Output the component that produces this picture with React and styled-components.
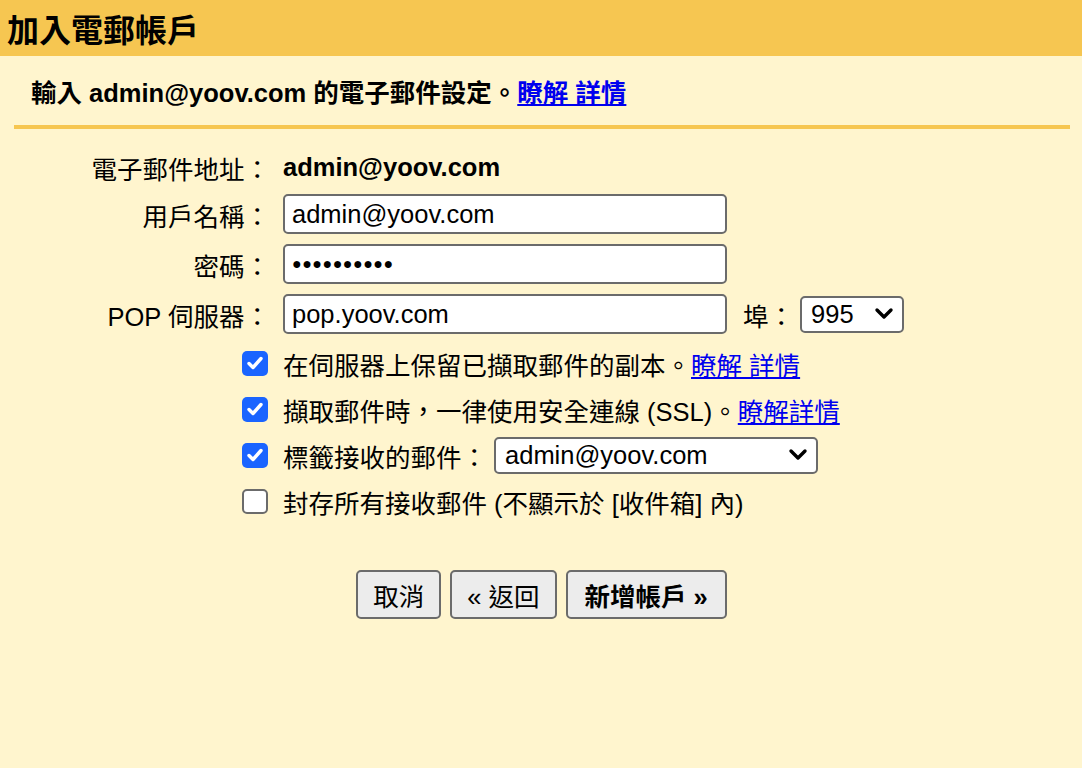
import React from 'react';
import styled, { createGlobalStyle } from 'styled-components';

const GlobalStyle = createGlobalStyle`
  html, body {
    margin: 0;
    padding: 0;
    background: #fff5ce;
  }
  body {
    font-family: "Liberation Sans", "Noto Sans CJK TC", sans-serif;
    color: #000;
  }
`;

const Page = styled.div`
  width: 1082px;
  height: 768px;
  background: #fff5ce;
  overflow: hidden;
`;

const Header = styled.div`
  height: 56px;
  background: #f6c651;
  display: flex;
  align-items: center;
  padding-left: 7px;
  font-size: 32px;
  font-weight: bold;
`;

const Intro = styled.div`
  margin: 0 12px 0 14px;
  padding: 16px 0 16px 17px;
  border-bottom: 4px solid #f6c651;
  font-size: 25.5px;
  font-weight: bold;
`;

const Link = styled.a`
  color: #0000ee;
  text-decoration: underline;
  cursor: pointer;
`;

const Form = styled.div`
  display: grid;
  grid-template-columns: 270px auto;
  column-gap: 13px;
  row-gap: 10px;
  padding-top: 22px;
  font-size: 25.5px;
`;

const Label = styled.div`
  text-align: right;
  display: flex;
  align-items: center;
  justify-content: flex-end;
  height: ${p => p.$h || 40}px;
`;

const Cell = styled.div`
  display: flex;
  align-items: center;
  height: ${p => p.$h || 40}px;
  font-weight: ${p => (p.$bold ? 'bold' : 'normal')};
`;

const Input = styled.div`
  box-sizing: border-box;
  width: ${p => p.$w}px;
  height: 40px;
  border: 2px solid #6b6b6b;
  border-radius: 5px;
  background: #fff;
  display: flex;
  align-items: center;
  padding-left: 7px;
  font-size: 25.5px;
`;

const Dots = styled.span`
  font-size: 16px;
  letter-spacing: 0.5px;
`;

const PortLabel = styled.span`
  margin: 0 6px 0 16px;
`;

const Select = styled.div`
  box-sizing: border-box;
  width: ${p => p.$w}px;
  height: 37px;
  margin-left: ${p => p.$ml || 0}px;
  border: 2px solid #6b6b6b;
  border-radius: 5px;
  background: #fff;
  display: flex;
  align-items: center;
  justify-content: space-between;
  padding: 0 8px 0 9px;
  font-size: 25.5px;
`;

const Checks = styled.div`
  display: flex;
  flex-direction: column;
  gap: 10px;
  padding-top: 11px;
  padding-left: 242px;
  font-size: 25.5px;
`;

const CheckRow = styled.div`
  display: flex;
  align-items: center;
  height: 36px;
  gap: 15px;
`;

const Box = styled.span`
  box-sizing: border-box;
  width: 26px;
  height: 25px;
  border-radius: 5px;
  flex-shrink: 0;
  display: flex;
  align-items: center;
  justify-content: center;
  background: ${p => (p.$on ? '#1a64ff' : '#fff')};
  border: ${p => (p.$on ? 'none' : '2px solid #6b6b6b')};
`;

const Buttons = styled.div`
  display: flex;
  justify-content: center;
  gap: 9px;
  padding-top: 51px;
  padding-left: 1px;
`;

const Button = styled.button`
  box-sizing: border-box;
  height: 49px;
  padding: 0 ${p => (p.$bold ? 17 : 15)}px;
  background: #ececec;
  border: 2px solid #6b6b6b;
  border-radius: 5px;
  font-family: inherit;
  font-size: 25.5px;
  font-weight: ${p => (p.$bold ? 'bold' : 'normal')};
  color: #000;
`;

const Chevron = () => (
  <svg width="20" height="14" viewBox="0 0 20 14">
    <path d="M3 3 L10 10 L17 3" fill="none" stroke="#000" strokeWidth="3.4" strokeLinecap="round" strokeLinejoin="round" />
  </svg>
);

const Tick = () => (
  <svg width="18" height="16" viewBox="0 0 18 16">
    <path d="M3 8.5 L7 12.5 L15 3.5" fill="none" stroke="#fff" strokeWidth="3.4" strokeLinecap="round" strokeLinejoin="round" />
  </svg>
);

export default function App() {
  return (
    <Page>
      <GlobalStyle />
      <Header>加入電郵帳戶</Header>
      <Intro>
        輸入 admin@yoov.com 的電子郵件設定。<Link>瞭解 詳情</Link>
      </Intro>

      <Form>
        <Label $h={33}>電子郵件地址：</Label>
        <Cell $h={33} $bold>admin@yoov.com</Cell>

        <Label>用戶名稱：</Label>
        <Cell><Input $w={444}>admin@yoov.com</Input></Cell>

        <Label>密碼：</Label>
        <Cell><Input $w={444}><Dots>●●●●●●●●●●</Dots></Input></Cell>

        <Label>POP 伺服器：</Label>
        <Cell>
          <Input $w={444}>pop.yoov.com</Input>
          <PortLabel>埠：</PortLabel>
          <Select $w={104}>995<Chevron /></Select>
        </Cell>
      </Form>

      <Checks>
        <CheckRow>
          <Box $on><Tick /></Box>
          <span>在伺服器上保留已擷取郵件的副本。<Link>瞭解 詳情</Link></span>
        </CheckRow>
        <CheckRow>
          <Box $on><Tick /></Box>
          <span>擷取郵件時，一律使用安全連線 (SSL)。<Link>瞭解詳情</Link></span>
        </CheckRow>
        <CheckRow>
          <Box $on><Tick /></Box>
          <span>標籤接收的郵件：</span>
          <Select $w={324} $ml={-8}>admin@yoov.com<Chevron /></Select>
        </CheckRow>
        <CheckRow>
          <Box />
          <span>封存所有接收郵件 (不顯示於 [收件箱] 內)</span>
        </CheckRow>
      </Checks>

      <Buttons>
        <Button>取消</Button>
        <Button>« 返回</Button>
        <Button $bold>新增帳戶 »</Button>
      </Buttons>
    </Page>
  );
}
